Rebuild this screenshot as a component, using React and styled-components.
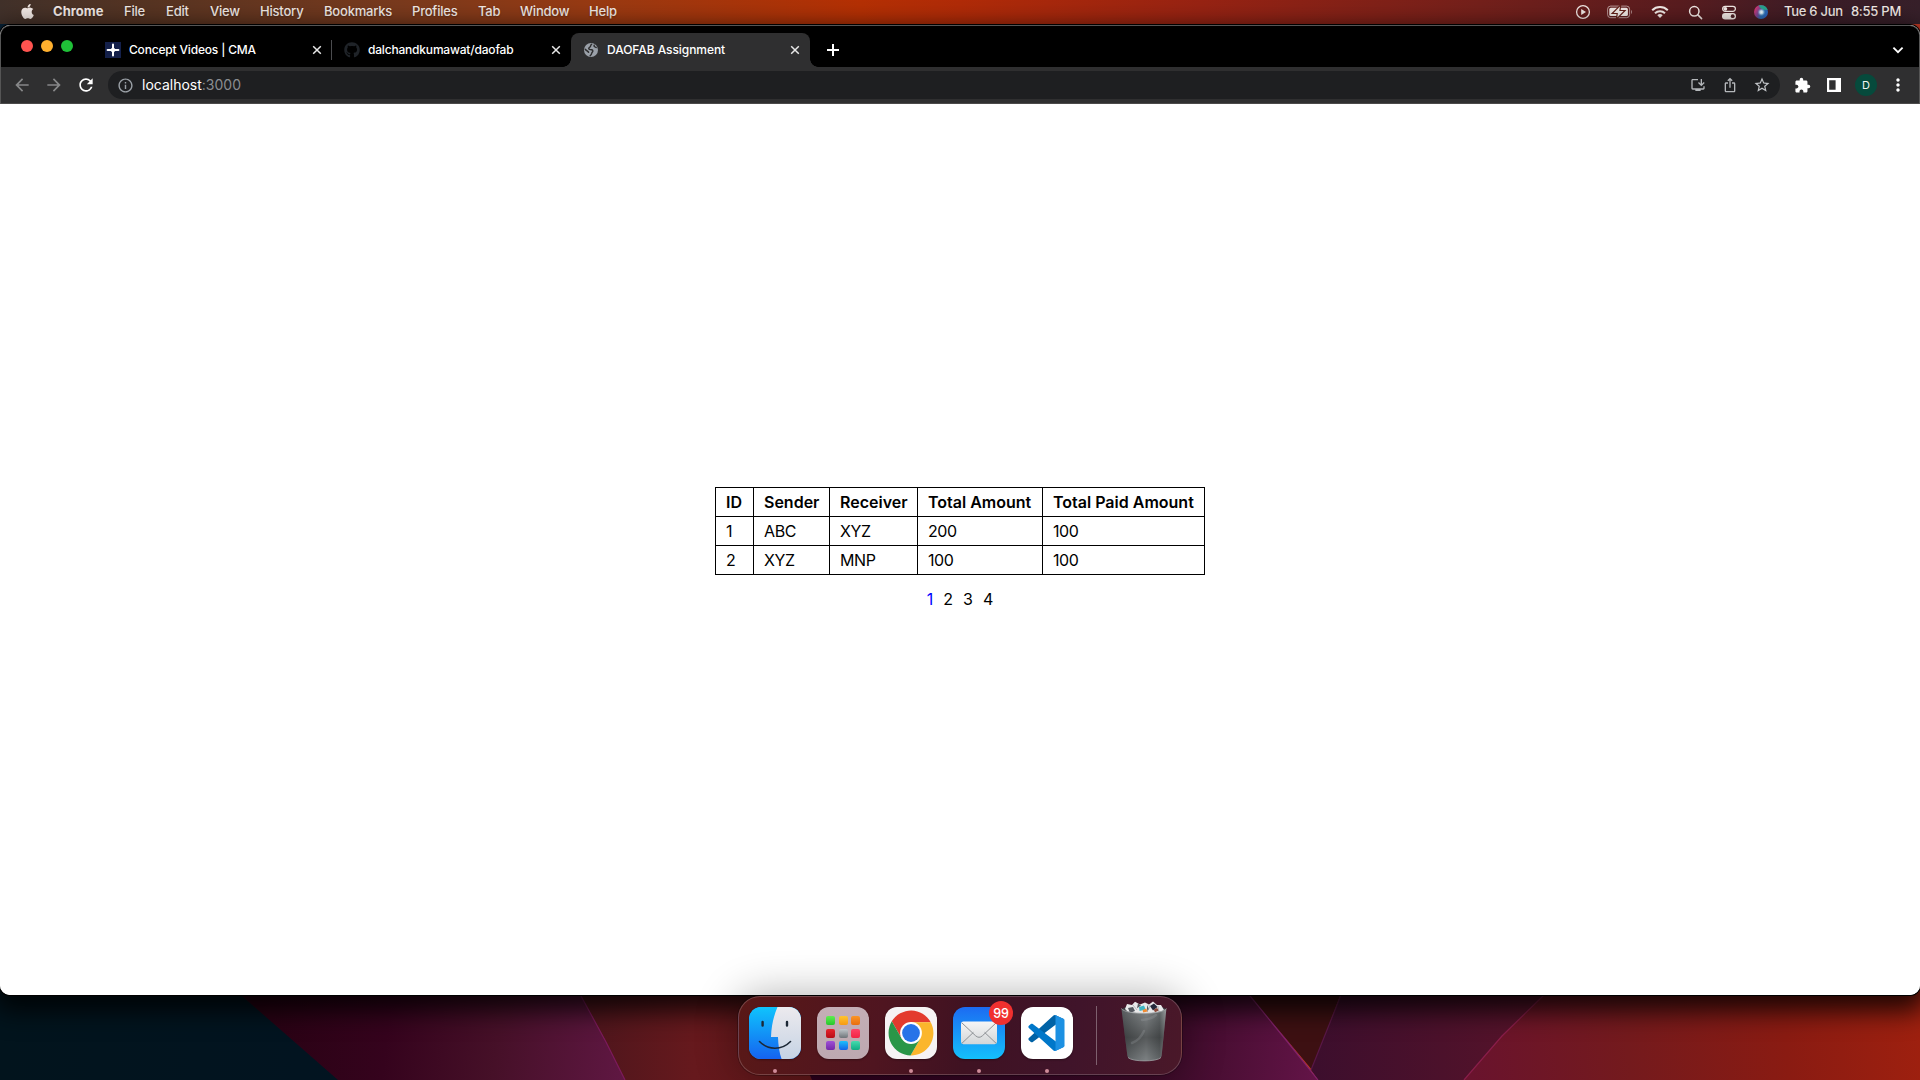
import React from "react";
import styled, { createGlobalStyle, css } from "styled-components";
import {
  MdArrowBack,
  MdArrowForward,
  MdRefresh,
  MdInfoOutline,
  MdOutlineInstallDesktop,
  MdIosShare,
  MdStarBorder,
  MdExtension,
  MdMoreVert,
} from "react-icons/md";
import { FaApple, FaGithub } from "react-icons/fa";

const GlobalStyle = createGlobalStyle`
  *, *::before, *::after { box-sizing: border-box; }
  body {
    margin: 0;
    overflow: hidden;
    font-family: Inter, "Liberation Sans", sans-serif;
  }
  svg { display: block; flex: none; }
`;

/* ---------- desktop ---------- */

const Desktop = styled.div`
  position: relative;
  isolation: isolate;
  display: flex;
  flex-direction: column;
  align-items: center;
  width: 1920px;
  height: 1080px;
  overflow: hidden;
  background: linear-gradient(90deg, #062238 0 50%, #c43a26 50%);
`;

const WallpaperArt = styled.svg`
  position: absolute;
  z-index: -1;
  left: 0;
  bottom: 0;
`;

const MenuBar = styled.header`
  display: flex;
  flex: none;
  align-items: center;
  justify-content: space-between;
  width: 100%;
  height: 24px;
  padding: 0 19px 0 19px;
  color: #f3eae6;
  font-size: 13px;
  font-weight: 500;
  letter-spacing: -0.15px;
  background: linear-gradient(
    90deg,
    #41312a 0,
    #573422 150px,
    #7a3a1d 400px,
    #9a3a12 600px,
    #b53004 860px,
    #b12b08 960px,
    #982313 1200px,
    #74201b 1480px,
    #591c1f 1680px,
    #3b1d27 1820px,
    #37202a 1920px
  );
`;

const MenuGroup = styled.div`
  display: flex;
  align-items: center;
  height: 100%;
  text-shadow: 0 1px 2px rgba(0, 0, 0, 0.3);
`;

const AppleSlot = styled.span`
  width: 34px;
  padding-bottom: 1px;
`;

const MenuItem = styled.span`
  width: ${(p) => p.$w}px;
  padding-bottom: 2px;
  white-space: nowrap;
  font-weight: ${(p) => (p.$strong ? 700 : 500)};
  letter-spacing: ${(p) => (p.$strong ? "0.05px" : "-0.2px")};
`;

const StatusSlot = styled.span`
  display: flex;
  justify-content: center;
  width: ${(p) => p.$w}px;
`;

const Clock = styled.span`
  display: flex;
  gap: 8px;
  margin-left: 7px;
  padding-bottom: 2px;
  white-space: nowrap;
  letter-spacing: -0.25px;
`;

/* ---------- browser window ---------- */

const Window = styled.section`
  display: flex;
  flex: none;
  flex-direction: column;
  width: 100%;
  height: 970px;
  margin-top: 1px;
  overflow: hidden;
  border-radius: 10px;
  background: #fff;
  box-shadow: 0 0 0 1px #000, 0 10px 26px 6px rgba(0, 0, 0, 0.8);
`;

const WindowChrome = styled.div`
  flex: none;
  border: 1px solid #555;
  border-bottom: 0;
  border-radius: 10px 10px 0 0;
  background: #000;
`;

const TabStrip = styled.div`
  display: flex;
  align-items: flex-end;
  height: 41px;
  padding: 0 14px 0 20px;
`;

const Lights = styled.div`
  display: flex;
  gap: 8px;
  width: 72px;
  padding-bottom: 15px;
`;

const Light = styled.span`
  width: 12px;
  height: 12px;
  border-radius: 50%;
  background: ${(p) => p.$color};
`;

const activeTab = css`
  border-radius: 8px 8px 0 0;
  background: #2f2f30;
  &::before,
  &::after {
    content: "";
    position: absolute;
    bottom: 0;
    width: 8px;
    height: 8px;
  }
  &::before {
    left: -8px;
    background: radial-gradient(circle at 0 0, transparent 7.5px, #2f2f30 8px);
  }
  &::after {
    right: -8px;
    background: radial-gradient(circle at 100% 0, transparent 7.5px, #2f2f30 8px);
  }
`;

const Tab = styled.div`
  position: relative;
  display: flex;
  align-items: center;
  gap: 8px;
  width: 239px;
  height: 34px;
  padding: 0 10px 0 12px;
  color: #fff;
  ${(p) => p.$active && activeTab}
`;

const Favicon = styled.span`
  display: flex;
  align-items: center;
  justify-content: center;
  width: 16px;
  height: 16px;
`;

const TabTitle = styled.span`
  flex: 1;
  padding-bottom: 2px;
  font-size: 12px;
  font-weight: 500;
  letter-spacing: ${(p) => p.$track}px;
  white-space: nowrap;
`;

const TabDivider = styled.span`
  width: 1px;
  height: 20px;
  margin: 0 0 7px -1px;
  background: #4b4c4f;
`;

const NewTab = styled.span`
  display: flex;
  align-items: center;
  height: 34px;
  margin-left: 17px;
`;

const TabSearch = styled(NewTab)`
  margin-left: auto;
`;

const Toolbar = styled.div`
  display: flex;
  align-items: center;
  height: 37px;
  padding: 0 5px 0 5px;
  border-bottom: 1px solid #4b4a4a;
  background: #2f2f30;
`;

const ToolButton = styled.span`
  display: flex;
  align-items: center;
  justify-content: center;
  width: 32px;
  height: 28px;
  color: ${(p) => p.$color || "#fff"};
`;

const Omnibox = styled.div`
  display: flex;
  flex: 1;
  align-items: center;
  height: 28px;
  margin: 0 6px;
  padding: 0 2px 0 9px;
  border-radius: 14px;
  background: #1e1f21;
`;

const Address = styled.span`
  flex: 1;
  margin-left: 8px;
  padding-bottom: 1px;
  color: #8b8d90;
  font-size: 14px;
  white-space: nowrap;
`;

const Host = styled.span`
  color: #fff;
`;

const Avatar = styled.span`
  display: flex;
  align-items: center;
  justify-content: center;
  width: 22px;
  height: 22px;
  border-radius: 50%;
  color: #f1f5f3;
  font-size: 11px;
  background: #064a3c;
`;

/* ---------- page ---------- */

const Page = styled.main`
  display: flex;
  flex: 1;
  flex-direction: column;
  align-items: center;
  justify-content: center;
  gap: 12px;
  color: #000;
  font-size: 16px;
  background: #fff;
`;

const Table = styled.table`
  width: 490px;
  table-layout: fixed;
  border-collapse: collapse;
`;

const Col = styled.col`
  width: ${(p) => p.$w}px;
`;

const cell = css`
  height: 29px;
  padding: 0 0 0 10px;
  border: 1px solid #000;
  line-height: 18px;
  text-align: left;
  white-space: nowrap;
`;

const HeadCell = styled.th`
  ${cell}
  font-weight: 600;
`;

const Cell = styled.td`
  ${cell}
  letter-spacing: -0.4px;
`;

const Pager = styled.nav`
  display: flex;
  gap: 10px;
  padding-bottom: 2px;
  line-height: 24px;
`;

const PageLink = styled.span`
  color: ${(p) => (p.$current ? "#0000ff" : "#000")};
`;

/* ---------- dock ---------- */

const DockBar = styled.footer`
  position: relative;
  display: flex;
  flex: none;
  gap: 16px;
  width: 444px;
  height: 79px;
  margin-top: 1px;
  padding: 10px;
  border: 1px solid rgba(255, 255, 255, 0.19);
  border-radius: 22px;
  background: linear-gradient(100deg, #591817 0, #4f1520 32%, #3f1222 52%, #40142a 75%, #4a1829 100%);
  box-shadow: 0 0 0 1px rgba(0, 0, 0, 0.25), 0 0 44px rgba(0, 0, 0, 0.32);
`;

const DockItem = styled.div`
  position: relative;
  display: flex;
  flex-direction: column;
  align-items: center;
  width: 52px;
`;

const RunningDot = styled.span`
  flex: none;
  width: 4px;
  height: 4px;
  margin-top: 10px;
  border-radius: 50%;
  background: #cf8c99;
`;

const Tile = styled.div`
  flex: none;
  width: 52px;
  height: 52px;
  overflow: hidden;
  border-radius: 12px;
  background: ${(p) => p.$bg};
  box-shadow: 0 1px 2px rgba(0, 0, 0, 0.35);
`;

const LaunchGrid = styled.div`
  display: grid;
  grid-template-columns: repeat(3, 9px);
  grid-auto-rows: 9px;
  gap: 3.5px;
  padding: 9px;
`;

const LaunchCell = styled.span`
  border-radius: 2px;
  background: linear-gradient(${(p) => p.$from}, ${(p) => p.$to});
`;

const Badge = styled.span`
  position: absolute;
  top: -6px;
  right: -8px;
  display: flex;
  align-items: center;
  justify-content: center;
  width: 24px;
  height: 24px;
  border-radius: 50%;
  color: #fff;
  font-size: 12.5px;
  font-weight: 500;
  letter-spacing: -0.2px;
  background: #f0302f;
`;

const DockDivider = styled.span`
  width: 1px;
  height: 59px;
  margin: -1px 6px 0 7px;
  background: rgba(255, 255, 255, 0.32);
`;

/* ---------- drawings ---------- */

const Wallpaper = () => (
  <WallpaperArt width="1920" height="100" viewBox="0 980 1920 100">
    <defs>
      <linearGradient id="wNavy" x1="0" x2="1" y1="0" y2="0">
        <stop offset="0" stopColor="#02141d" />
        <stop offset="1" stopColor="#021421" />
      </linearGradient>
      <linearGradient id="wPlum" gradientUnits="userSpaceOnUse" x1="260" x2="625" y1="1010" y2="1050">
        <stop offset="0" stopColor="#280213" />
        <stop offset="0.35" stopColor="#35031d" />
        <stop offset="0.65" stopColor="#461028" />
        <stop offset="1" stopColor="#5f1742" />
      </linearGradient>
      <linearGradient id="wRed" x1="0" x2="1" y1="0" y2="0">
        <stop offset="0" stopColor="#4a151c" />
        <stop offset="0.5" stopColor="#66191d" />
        <stop offset="1" stopColor="#5f1719" />
      </linearGradient>
      <linearGradient id="wMagenta" gradientUnits="userSpaceOnUse" x1="810" x2="1320" y1="1000" y2="1080">
        <stop offset="0" stopColor="#2a001b" />
        <stop offset="0.7" stopColor="#3d0b29" />
        <stop offset="1" stopColor="#641448" />
      </linearGradient>
      <linearGradient id="wViolet" x1="0" x2="1" y1="0" y2="0">
        <stop offset="0" stopColor="#3c0e2d" />
        <stop offset="1" stopColor="#5b1429" />
      </linearGradient>
      <linearGradient id="wEmber" gradientUnits="userSpaceOnUse" x1="1470" x2="1920" y1="1060" y2="1020">
        <stop offset="0" stopColor="#69132d" />
        <stop offset="0.35" stopColor="#741a1d" />
        <stop offset="0.7" stopColor="#8a1b12" />
        <stop offset="1" stopColor="#9e200f" />
      </linearGradient>
    </defs>
    <rect y="980" width="400" height="100" fill="url(#wNavy)" />
    <path d="M228 980L242 996L290 1038L338 1080H640L574 980Z" fill="url(#wPlum)" />
    <path d="M572 980L581 996L606 1042L625 1080H815L770 980Z" fill="url(#wRed)" />
    <path d="M770 980L812 1080H1318L1240 980Z" fill="url(#wMagenta)" />
    <path d="M1240 980L1250 996L1312 1070L1346 980Z" fill="#3d1012" />
    <path d="M1347 980L1311 1070L1318 1080H1464L1570 980Z" fill="url(#wViolet)" />
    <path d="M1558 980L1543 996L1502 1036L1464 1080H1920V980Z" fill="url(#wEmber)" />
    <g fill="none" strokeWidth="1.2">
      <path d="M572 980L581 996L606 1042L625 1080" stroke="#7d1a5c" />
      <path d="M1240 980L1250 996L1286 1040L1318 1080" stroke="#82226a" />
      <path d="M1347 980L1311 1070" stroke="#591747" />
      <path d="M1558 980L1543 996L1502 1036L1464 1080" stroke="#8a1e4a" />
    </g>
  </WallpaperArt>
);

const PlayIcon = () => (
  <svg width="16" height="16" viewBox="0 0 16 16">
    <circle cx="8" cy="8" r="6.4" fill="none" stroke="currentColor" strokeWidth="1.3" />
    <path d="M6.2 5.1L11 8L6.2 10.9Z" fill="currentColor" />
  </svg>
);

const BatteryIcon = () => (
  <svg width="26" height="14" viewBox="0 0 26 14">
    <rect x="0.6" y="1.1" width="22" height="11.6" rx="3" fill="none" stroke="currentColor" opacity="0.6" />
    <rect x="2.3" y="2.8" width="18.6" height="8.2" rx="1.6" fill="currentColor" />
    <path d="M24 5v4c1.2-.4 1.2-3.6 0-4z" fill="currentColor" opacity="0.6" />
    <path
      d="M12.9 1.6L6.6 7.9H10.9L10.3 12.4L16.6 6.1H12.3Z"
      fill="currentColor"
      stroke="#642019"
      strokeWidth="2.4"
      paintOrder="stroke"
    />
  </svg>
);

const WifiIcon = () => (
  <svg width="18" height="14" viewBox="0 0 18 14" fill="none" stroke="currentColor" strokeWidth="2">
    <path d="M1.2 5.2a11.2 11.2 0 0 1 15.6 0" />
    <path d="M4 8.2a7.2 7.2 0 0 1 10 0" />
    <path d="M6.3 10.2a4 4 0 0 1 5.4 0L9 13z" fill="currentColor" stroke="none" />
  </svg>
);

const SearchIcon = () => (
  <svg width="15" height="15" viewBox="0 0 15 15" fill="none" stroke="currentColor" strokeWidth="1.5" strokeLinecap="round">
    <circle cx="6.3" cy="6.3" r="4.7" />
    <path d="M9.9 9.9L13.6 13.6" />
  </svg>
);

const ControlIcon = () => (
  <svg width="16" height="15" viewBox="0 0 16 15">
    <rect x="1.6" y="1.3" width="12.8" height="5" rx="2.5" fill="none" stroke="currentColor" strokeWidth="1.2" />
    <circle cx="4.3" cy="3.8" r="1.9" fill="currentColor" />
    <rect x="1" y="8" width="14" height="6.4" rx="3.2" fill="currentColor" />
    <circle cx="11.7" cy="11.2" r="1.9" fill="#4a1f24" />
  </svg>
);

const SiriIcon = () => (
  <svg width="14" height="14" viewBox="0 0 14 14">
    <defs>
      <radialGradient id="siri" cx="0.5" cy="0.5" r="0.5">
        <stop offset="0" stopColor="#fff" />
        <stop offset="0.3" stopColor="#cfe9f8" stopOpacity="0.9" />
        <stop offset="0.75" stopColor="#5aa0c8" stopOpacity="0" />
      </radialGradient>
      <linearGradient id="siriRim" x1="0" x2="1" y1="0.3" y2="0.8">
        <stop offset="0" stopColor="#e0356e" />
        <stop offset="0.35" stopColor="#7b4390" />
        <stop offset="0.6" stopColor="#2a6db0" />
        <stop offset="1" stopColor="#2d62c6" />
      </linearGradient>
    </defs>
    <circle cx="7" cy="7" r="7" fill="url(#siriRim)" />
    <path d="M4.5 .6C8.6-.7 12.6 1.6 13.6 5C10.5 5.4 6.4 4.4 4.5.6Z" fill="#28a48c" />
    <circle cx="7.4" cy="7.2" r="5.4" fill="url(#siri)" />
  </svg>
);

const CloseIcon = () => (
  <svg width="10" height="10" viewBox="0 0 10 10" stroke="#e8e8e8" strokeWidth="1.5">
    <path d="M1.2 1.2L8.8 8.8M8.8 1.2L1.2 8.8" />
  </svg>
);

const SparkIcon = () => (
  <svg width="16" height="16" viewBox="0 0 16 16">
    <rect width="16" height="16" fill="#14204a" />
    <path d="M8 2.6V13.4M2.6 8H13.4" stroke="#fff" strokeWidth="2" strokeLinecap="round" />
    <path d="M8 4.6L9.6 6.4L11.4 8L9.6 9.6L8 11.4L6.4 9.6L4.6 8L6.4 6.4Z" fill="#fff" />
  </svg>
);

const GlobeIcon = () => (
  <svg width="14" height="14" viewBox="0 0 14 14">
    <circle cx="7" cy="7" r="7" fill="#9aa0a8" />
    <path
      d="M7.6 1.3C6 2.2 7.4 3.4 5.6 4.3C4.2 5 4.6 6.3 6 6.4C7.6 6.4 8.8 6.6 8.8 8C8.9 9 7.8 9.2 7.7 10.2C7.6 11.2 7 12 6.2 12.6M1.4 6.4C2.4 7.6 3.8 8.2 4.6 9.2M10.2 2.2C9.6 3.2 10.6 4 12.2 4.4"
      fill="none"
      stroke="#2f2f30"
      strokeWidth="1.5"
      strokeLinecap="round"
    />
  </svg>
);

const SidePanelIcon = () => (
  <svg width="14" height="14" viewBox="0 0 14 14">
    <path d="M0 0H14V14H0ZM2.2 2.2V11.8H8.6V2.2Z" fill="#fff" fillRule="evenodd" />
  </svg>
);

const FinderArt = () => (
  <svg width="52" height="52" viewBox="0 0 52 52">
    <defs>
      <linearGradient id="fBlue" x1="0" x2="0" y1="0" y2="1">
        <stop offset="0" stopColor="#0fc4fd" />
        <stop offset="1" stopColor="#1563f0" />
      </linearGradient>
      <linearGradient id="fPale" x1="0" x2="0" y1="0" y2="1">
        <stop offset="0" stopColor="#eceaee" />
        <stop offset="1" stopColor="#c6d3e4" />
      </linearGradient>
    </defs>
    <rect width="52" height="52" fill="url(#fBlue)" />
    <path d="M28.5 0C25 8 22.4 18 22 30H29C29.2 38 30.4 46 32.6 52H52V0Z" fill="url(#fPale)" />
    <path d="M13.6 15v3.6M38 15v3.6" stroke="#1c2836" strokeWidth="2.4" strokeLinecap="round" />
    <path d="M10.5 34.5C19 43.4 33 43.4 41.5 34.5" fill="none" stroke="#1c2836" strokeWidth="1.6" strokeLinecap="round" />
  </svg>
);

const ChromeArt = () => (
  <svg width="52" height="52" viewBox="-26 -26 52 52">
    <path d="M-19.2-11.66A22.5 22.5 0 0 1 19.7-10.8H0L-9.35 5.4Z" fill="#e33b2e" />
    <path d="M19.7-10.8A22.5 22.5 0 0 1-.5 22.46L9.35 5.4L0-10.8Z" fill="#fbb62c" />
    <path d="M-.5 22.46A22.5 22.5 0 0 1-19.2-11.66L-9.35 5.4H9.35Z" fill="#2a9648" />
    <circle r="10.9" fill="#fff" />
    <circle r="8.9" fill="#2773e8" />
  </svg>
);

const MailArt = () => (
  <svg width="52" height="52" viewBox="0 0 52 52">
    <defs>
      <linearGradient id="mPaper" x1="0" x2="0" y1="0" y2="1">
        <stop offset="0" stopColor="#f6f6f6" />
        <stop offset="1" stopColor="#d3d6d8" />
      </linearGradient>
    </defs>
    <rect x="8" y="14.6" width="36" height="22.6" rx="2.4" fill="url(#mPaper)" />
    <g fill="none" stroke="#8d9195" strokeWidth="1">
      <path d="M9 36.2L20.4 25.4M43 36.2L31.6 25.4" />
      <path d="M8.8 15.8L22.4 28.6Q26 32 29.6 28.6L43.2 15.8" />
    </g>
  </svg>
);

const CodeArt = () => (
  <svg width="52" height="52" viewBox="-20.5 -22 144 144">
    <path
      fill="#0062a6"
      d="M96.46 10.8L75.86.88C73.47-.27 70.62.21 68.75 2.08L1.3 63.58C-.52 65.24-.51 68.09 1.3 69.75L6.81 74.75C8.3 76.1 10.53 76.2 12.13 74.99L93.36 13.37C96.09 11.3 100 13.25 100 16.67V16.43C100 14.03 98.62 11.84 96.46 10.8Z"
    />
    <path
      fill="#0077c9"
      d="M96.46 89.2L75.86 99.12C73.47 100.27 70.62 99.79 68.75 97.92L1.3 36.42C-.52 34.76-.51 31.91 1.3 30.25L6.81 25.25C8.3 23.9 10.53 23.8 12.13 25.01L93.36 86.63C96.09 88.7 100 86.75 100 83.33V83.57C100 85.97 98.62 88.16 96.46 89.2Z"
    />
    <path
      fill="#1c90e2"
      d="M75.86 99.13C73.47 100.27 70.62 99.79 68.75 97.92C71.06 100.22 75 98.59 75 95.33V4.67C75 1.41 71.06-.22 68.75 2.08C70.62.21 73.47-.27 75.86.87L96.46 10.78C98.62 11.82 100 14.01 100 16.41V83.59C100 85.99 98.62 88.18 96.46 89.22Z"
    />
  </svg>
);

const TrashSlot = styled.div`
  width: 52px;
  margin: -6px 0 0 -1px;
`;

const TrashArt = () => (
  <svg width="52" height="62" viewBox="0 0 52 62">
    <defs>
      <linearGradient id="can" x1="0" x2="1" y1="0" y2="0">
        <stop offset="0" stopColor="#5d6265" />
        <stop offset="0.25" stopColor="#74797b" />
        <stop offset="0.55" stopColor="#8b9092" />
        <stop offset="0.85" stopColor="#6a6f71" />
        <stop offset="1" stopColor="#a3a7a9" />
      </linearGradient>
      <linearGradient id="canShade" x1="0" x2="0" y1="0" y2="1">
        <stop offset="0" stopColor="#000" stopOpacity="0.05" />
        <stop offset="0.55" stopColor="#000" stopOpacity="0.38" />
        <stop offset="1" stopColor="#000" stopOpacity="0.1" />
      </linearGradient>
    </defs>
    <ellipse cx="26" cy="8.5" rx="22" ry="4" fill="#3c3f42" />
    <path d="M7 8L9 3L14 4L17 .8L22 3.4L27 1.6L31 3.4L35 .6L39 4L43 4L46 9L40 13H12Z" fill="#e9e9ea" />
    <path d="M10 7l5-1l2 4l-5 2zM20 2.6l3 2l-4 2.6zM29 4l2 4l-2 3z" fill="#54585f" />
    <path d="M21 6l5-1.6l1.6 4l-6 1.6z" fill="#3fb6c4" />
    <path d="M24.6 9l3.6-1.6l1.4 3.2l-4.4.8z" fill="#f08b32" />
    <path d="M32 5l4-2.6l3.6 3.6l-4.6 3.4z" fill="#252a3c" />
    <path d="M35.6 8.6l3.4-1.6l2 2.6l-4 1.6z" fill="#8c4a3c" />
    <path d="M30 3l2 3l-3 4M15 4l4 5M40 5l1 6" fill="none" stroke="#a9acb0" strokeWidth="0.8" />
    <path d="M3.4 7.6C8 14 44 14 48.4 7.6L43.6 55C42.4 61.5 10.6 61.5 9.4 55Z" fill="url(#can)" />
    <path d="M3.4 7.6C8 14 44 14 48.4 7.6L43.6 55C42.4 61.5 10.6 61.5 9.4 55Z" fill="url(#canShade)" />
    <path d="M24 19q10-1 14-5M14 42q8-3 12-12" fill="none" stroke="#a4a8aa" strokeWidth="2.5" opacity="0.25" strokeLinecap="round" />
    <path d="M3.4 7.6C8 14 44 14 48.4 7.6" fill="none" stroke="#9da1a4" strokeWidth="0.9" />
    <path d="M10 56.5C14 61 39 61 43 56.5" fill="none" stroke="#9ea3a5" strokeWidth="0.8" />
  </svg>
);

/* ---------- data ---------- */

const menus = [
  ["File", 42],
  ["Edit", 44],
  ["View", 50],
  ["History", 64],
  ["Bookmarks", 88],
  ["Profiles", 66],
  ["Tab", 42],
  ["Window", 69],
  ["Help", 40],
];

const columns = [
  ["ID", 38],
  ["Sender", 76],
  ["Receiver", 88],
  ["Total Amount", 125],
  ["Total Paid Amount", 162],
];

const rows = [
  ["1", "ABC", "XYZ", "200", "100"],
  ["2", "XYZ", "MNP", "100", "100"],
];

const launchColors = [
  ["#5fee4f", "#27c62d"],
  ["#ffc42f", "#f79a12"],
  ["#fb9526", "#e86d10"],
  ["#e8222c", "#b60d17"],
  ["#bfc6ca", "#6e7479"],
  ["#ff4266", "#f12545"],
  ["#a04fd6", "#7429a9"],
  ["#1cc1fb", "#1463e8"],
  ["#45dcae", "#12ab84"],
];

export default function App() {
  return (
    <>
      <GlobalStyle />
      <Desktop>
        <Wallpaper />
        <MenuBar>
          <MenuGroup>
            <AppleSlot>
              <FaApple size={17} />
            </AppleSlot>
            <MenuItem $w={71} $strong>
              Chrome
            </MenuItem>
            {menus.map(([label, w]) => (
              <MenuItem key={label} $w={w}>
                {label}
              </MenuItem>
            ))}
          </MenuGroup>
          <MenuGroup>
            <StatusSlot $w={34}><PlayIcon /></StatusSlot>
            <StatusSlot $w={41}><BatteryIcon /></StatusSlot>
            <StatusSlot $w={38}><WifiIcon /></StatusSlot>
            <StatusSlot $w={34}><SearchIcon /></StatusSlot>
            <StatusSlot $w={32}><ControlIcon /></StatusSlot>
            <StatusSlot $w={32}><SiriIcon /></StatusSlot>
            <Clock>
              <span>Tue 6 Jun</span>
              <span>8:55 PM</span>
            </Clock>
          </MenuGroup>
        </MenuBar>

        <Window>
          <WindowChrome>
            <TabStrip>
              <Lights>
                <Light $color="#ff5450" />
                <Light $color="#ffb02e" />
                <Light $color="#1fc138" />
              </Lights>
              <Tab>
                <Favicon><SparkIcon /></Favicon>
                <TabTitle $track={-0.18}>Concept Videos | CMA</TabTitle>
                <CloseIcon />
              </Tab>
              <TabDivider />
              <Tab>
                <Favicon><FaGithub size={16} color="#1f2328" /></Favicon>
                <TabTitle $track={-0.19}>dalchandkumawat/daofab</TabTitle>
                <CloseIcon />
              </Tab>
              <Tab $active>
                <Favicon><GlobeIcon /></Favicon>
                <TabTitle $track={-0.06}>DAOFAB Assignment</TabTitle>
                <CloseIcon />
              </Tab>
              <NewTab>
                <svg width="12" height="12" viewBox="0 0 12 12" stroke="#fff" strokeWidth="2">
                  <path d="M6 0V12M0 6H12" />
                </svg>
              </NewTab>
              <TabSearch>
                <svg width="14" height="8" viewBox="0 0 14 8" fill="none" stroke="#fff" strokeWidth="1.8">
                  <path d="M2.4 1.6L7 6.2L11.6 1.6" />
                </svg>
              </TabSearch>
            </TabStrip>
            <Toolbar>
              <ToolButton $color="#868788"><MdArrowBack size={20} /></ToolButton>
              <ToolButton $color="#868788"><MdArrowForward size={20} /></ToolButton>
              <ToolButton><MdRefresh size={20} /></ToolButton>
              <Omnibox>
                <MdInfoOutline size={17} color="#9aa0a6" />
                <Address>
                  <Host>localhost</Host>:3000
                </Address>
                <ToolButton $color="#b4b7ba"><MdOutlineInstallDesktop size={16} /></ToolButton>
                <ToolButton $color="#b4b7ba"><MdIosShare size={16} /></ToolButton>
                <ToolButton $color="#c0c3c6"><MdStarBorder size={18} /></ToolButton>
              </Omnibox>
              <ToolButton><MdExtension size={17} /></ToolButton>
              <ToolButton><SidePanelIcon /></ToolButton>
              <ToolButton><Avatar>D</Avatar></ToolButton>
              <ToolButton><MdMoreVert size={20} /></ToolButton>
            </Toolbar>
          </WindowChrome>

          <Page>
            <Table>
              <colgroup>
                {columns.map(([name, w]) => (
                  <Col key={name} $w={w} />
                ))}
              </colgroup>
              <thead>
                <tr>
                  {columns.map(([name]) => (
                    <HeadCell key={name}>{name}</HeadCell>
                  ))}
                </tr>
              </thead>
              <tbody>
                {rows.map((row) => (
                  <tr key={row[0]}>
                    {row.map((value, i) => (
                      <Cell key={i}>{value}</Cell>
                    ))}
                  </tr>
                ))}
              </tbody>
            </Table>
            <Pager>
              {[1, 2, 3, 4].map((n) => (
                <PageLink key={n} $current={n === 1}>
                  {n}
                </PageLink>
              ))}
            </Pager>
          </Page>
        </Window>

        <DockBar>
          <DockItem>
            <Tile $bg="#1aa5f8"><FinderArt /></Tile>
            <RunningDot />
          </DockItem>
          <DockItem>
            <Tile $bg="linear-gradient(#c4aeb6, #bda9b0)">
              <LaunchGrid>
                {launchColors.map(([from, to]) => (
                  <LaunchCell key={from} $from={from} $to={to} />
                ))}
              </LaunchGrid>
            </Tile>
          </DockItem>
          <DockItem>
            <Tile $bg="#f6f3f4"><ChromeArt /></Tile>
            <RunningDot />
          </DockItem>
          <DockItem>
            <Tile $bg="linear-gradient(#1c6bf2, #14c0fb)"><MailArt /></Tile>
            <Badge>99</Badge>
            <RunningDot />
          </DockItem>
          <DockItem>
            <Tile $bg="#fff"><CodeArt /></Tile>
            <RunningDot />
          </DockItem>
          <DockDivider />
          <TrashSlot>
            <TrashArt />
          </TrashSlot>
        </DockBar>
      </Desktop>
    </>
  );
}
